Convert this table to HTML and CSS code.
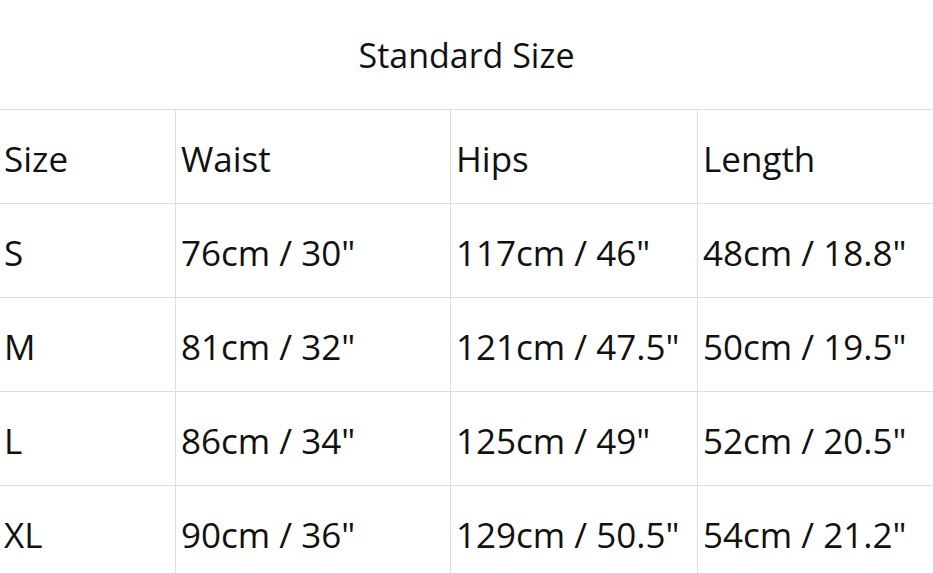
FILE: index.html
```html
<!DOCTYPE html>
<html>
<head>
<meta charset="utf-8">
<link rel="stylesheet" href="styles.css">
</head>
<body>
<div class="page">
  <h1 class="title">Standard Size</h1>
  <table class="sizes">
    <colgroup>
      <col class="c1"><col class="c2"><col class="c3"><col class="c4">
    </colgroup>
    <tr><td>Size</td><td>Waist</td><td>Hips</td><td>Length</td></tr>
    <tr><td>S</td><td>76cm / 30"</td><td>117cm / 46"</td><td>48cm / 18.8"</td></tr>
    <tr><td>M</td><td>81cm / 32"</td><td>121cm / 47.5"</td><td>50cm / 19.5"</td></tr>
    <tr><td>L</td><td>86cm / 34"</td><td>125cm / 49"</td><td>52cm / 20.5"</td></tr>
    <tr><td>XL</td><td>90cm / 36"</td><td>129cm / 50.5"</td><td>54cm / 21.2"</td></tr>
  </table>
</div>
</body>
</html>
```
FILE: styles.css
```css
html, body {
  margin: 0;
  padding: 0;
  background: #fff;
}
body {
  font-family: "Open Sans", "Noto Sans", sans-serif;
  color: #111;
  overflow: hidden;
}
.page {
  width: 933px;
  height: 573px;
  overflow: hidden;
}
.title {
  margin: 0;
  height: 109px;
  display: flex;
  align-items: center;
  justify-content: center;
  font-size: 34px;
  font-weight: 400;
  padding-bottom: 0;
  box-sizing: border-box;
}
.sizes {
  border-collapse: collapse;
  table-layout: fixed;
  width: 960px;
  margin-left: -2px;
}
.c1 { width: 177px; }
.c2 { width: 275px; }
.c3 { width: 247px; }
.c4 { width: 261px; }
.sizes td {
  border: 1px solid #dedede;
  height: 94px;
  padding: 4px 0 0 5px;
  font-size: 35px;
  white-space: nowrap;
  box-sizing: border-box;
  vertical-align: middle;
}
```
